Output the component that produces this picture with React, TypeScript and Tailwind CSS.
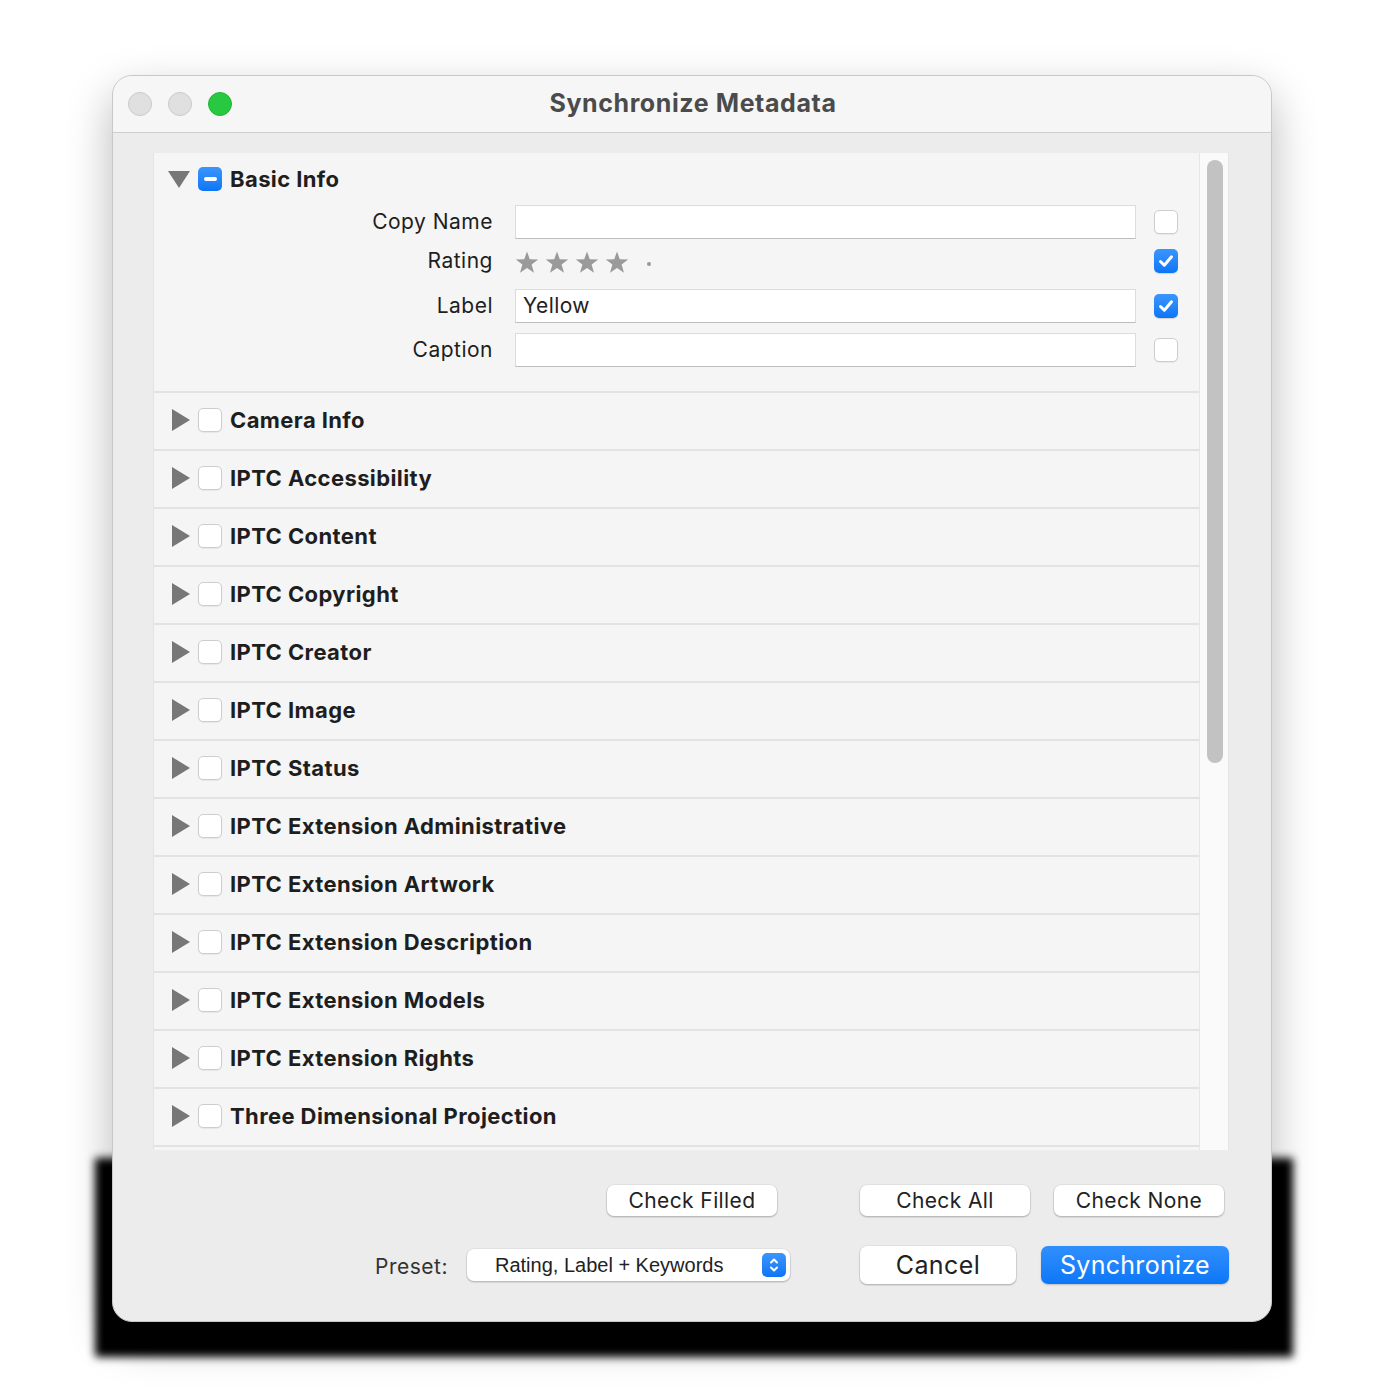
import React from 'react';

const sections = [
  'Camera Info',
  'IPTC Accessibility',
  'IPTC Content',
  'IPTC Copyright',
  'IPTC Creator',
  'IPTC Image',
  'IPTC Status',
  'IPTC Extension Administrative',
  'IPTC Extension Artwork',
  'IPTC Extension Description',
  'IPTC Extension Models',
  'IPTC Extension Rights',
  'Three Dimensional Projection',
];

const Box = ({ checked = false }: { checked?: boolean }) =>
  checked ? (
    <div className="w-[24px] h-[24px] rounded-[5px] bg-gradient-to-b from-[#3a95fd] to-[#0a76f6] flex items-center justify-center shadow-[0_1px_1px_rgba(0,0,0,0.15)]">
      <svg width="18" height="18" viewBox="0 0 18 18">
        <path d="M3.5 9.5 L7.3 13.2 L14.5 4.8" fill="none" stroke="white" strokeWidth="3" strokeLinecap="round" strokeLinejoin="round" />
      </svg>
    </div>
  ) : (
    <div className="w-[24px] h-[24px] rounded-[5px] bg-white border border-[#cdcdcd] shadow-[0_1px_1px_rgba(0,0,0,0.06)]" />
  );

const Star = () => (
  <svg width="24" height="23" viewBox="0 0 24 23">
    <polygon points="12,0.5 14.8,8.3 23.2,8.5 16.6,13.6 19,21.8 12,17 5,21.8 7.4,13.6 0.8,8.5 9.2,8.3" fill="#9a9a9a" />
  </svg>
);

const Btn = ({ label, w, h = 'h-[31px]', text = 'text-[21px]' }: { label: string; w: string; h?: string; text?: string }) => (
  <button className={`${w} ${h} ${text} rounded-[7px] bg-white text-[#222] tracking-[0.4px] shadow-[0_0.5px_0_1px_rgba(0,0,0,0.08),0_1px_2px_rgba(0,0,0,0.18)] flex items-center justify-center leading-none`}>
    {label}
  </button>
);

export default function App() {
  return (
    <div className="relative min-h-[1398px] bg-white pt-[75px] pl-[112px]" style={{ fontFamily: 'Inter, "Noto Sans", sans-serif' }}>
      {/* dark band behind the window */}
      <div className="absolute left-[95px] top-[1158px] w-[1198px] h-[199px] bg-black blur-[4px]" />

      <div className="relative w-[1160px] h-[1247px] rounded-[20px] overflow-hidden bg-[#ececec] border border-[#c8c8c8] shadow-[0_18px_45px_rgba(0,0,0,0.28)]">
        {/* title bar */}
        <div className="relative h-[57px] bg-[#f6f6f6] border-b border-[#cfcfcf] flex items-center">
          <div className="flex items-center gap-[16px] pl-[15px]">
            <div className="w-[24px] h-[24px] rounded-full bg-[#e0e0e0] border border-[#c9c9c9]" />
            <div className="w-[24px] h-[24px] rounded-full bg-[#e0e0e0] border border-[#c9c9c9]" />
            <div className="w-[24px] h-[24px] rounded-full bg-[#28c840] border border-[#22b537]" />
          </div>
          <div className="absolute inset-0 flex items-center justify-center text-[25px] font-bold text-[#4b4b4b] tracking-[0.6px] pl-[2px]">
            Synchronize Metadata
          </div>
        </div>

        {/* scroll panel */}
        <div className="ml-[40px] mt-[20px] w-[1076px] h-[997px] flex bg-[#f5f5f5] border-l border-[#e4e4e4] overflow-hidden">
          <div className="w-[1046px] flex flex-col">
            {/* Basic Info */}
            <div className="h-[240px] border-b-2 border-[#e2e2e2] flex flex-col">
              <div className="h-[52px] flex items-center pl-[14px]">
                <svg width="22" height="17" viewBox="0 0 22 17" className="mr-[8px]">
                  <polygon points="0,0 22,0 11,17" fill="#777" />
                </svg>
                <div className="w-[24px] h-[24px] rounded-[5px] bg-gradient-to-b from-[#3a95fd] to-[#0a76f6] flex items-center justify-center">
                  <div className="w-[13px] h-[4px] rounded-full bg-white" />
                </div>
                <span className="ml-[8px] text-[22px] font-bold text-[#1e1e1e] tracking-[0.4px]">Basic Info</span>
              </div>
              {[
                { label: 'Copy Name', kind: 'input', value: '', checked: false, mt: 'mt-0' },
                { label: 'Rating', kind: 'stars', value: '', checked: true, mt: 'mt-[5px]' },
                { label: 'Label', kind: 'input', value: 'Yellow', checked: true, mt: 'mt-[11px]' },
                { label: 'Caption', kind: 'input', value: '', checked: false, mt: 'mt-[10px]' },
              ].map((f) => (
                <div key={f.label} className={`${f.mt} h-[34px] flex items-center`}>
                  <div className="w-[339px] text-right text-[21px] text-[#1e1e1e] tracking-[0.5px]">{f.label}</div>
                  <div className="ml-[22px] w-[621px] h-[34px]">
                    {f.kind === 'input' ? (
                      <div className="h-full bg-white border border-[#dcdcdc] border-b-[#bdbdbd] flex items-center pl-[7px] text-[21px] text-[#222] tracking-[0.4px]">
                        {f.value}
                      </div>
                    ) : (
                      <div className="h-full flex items-center gap-[6px] pt-[2px]">
                        <Star />
                        <Star />
                        <Star />
                        <Star />
                        <div className="ml-[12px] mt-[4px] w-[4px] h-[4px] rounded-full bg-[#999]" />
                      </div>
                    )}
                  </div>
                  <div className="ml-[18px]">
                    <Box checked={f.checked} />
                  </div>
                </div>
              ))}
            </div>

            {sections.map((s) => (
              <div key={s} className="h-[58px] shrink-0 border-b-2 border-[#e2e2e2] flex items-center pl-[18px] pb-[2px]">
                <svg width="18" height="22" viewBox="0 0 18 22" className="mr-[8px]">
                  <polygon points="0,0 18,11 0,22" fill="#777" />
                </svg>
                <Box />
                <span className="ml-[8px] text-[22px] font-bold text-[#1e1e1e] tracking-[0.4px]">{s}</span>
              </div>
            ))}
          </div>

          {/* scrollbar */}
          <div className="w-[30px] bg-[#fafafa] border-l border-[#e6e6e6] border-r pt-[7px] pl-[7px]">
            <div className="w-[16px] h-[603px] rounded-full bg-[#c2c2c2]" />
          </div>
        </div>

        {/* bottom controls */}
        <div className="mt-[35px] flex items-center pl-[494px]">
          <Btn label="Check Filled" w="w-[170px]" />
          <div className="ml-[83px]">
            <Btn label="Check All" w="w-[170px]" />
          </div>
          <div className="ml-[24px]">
            <Btn label="Check None" w="w-[170px]" />
          </div>
        </div>

        <div className="mt-[30px] flex items-center pl-[262px]">
          <span className="text-[21px] text-[#333] tracking-[0.5px] pt-[4px]">Preset:</span>
          <div className="ml-[19px] w-[323px] h-[32px] rounded-[7px] bg-white shadow-[0_0.5px_0_1px_rgba(0,0,0,0.07),0_1px_2px_rgba(0,0,0,0.18)] flex items-center pl-[28px] pr-[4px]">
            <span className="flex-1 text-[20px] text-[#222]" style={{ fontFamily: '"Liberation Sans", Arial, sans-serif' }}>
              Rating, Label + Keywords
            </span>
            <div className="w-[24px] h-[24px] rounded-[5px] bg-gradient-to-b from-[#3a95fd] to-[#0a76f6] flex items-center justify-center">
              <svg width="12" height="18" viewBox="0 0 12 18">
                <path d="M3 6.5 L6 3.5 L9 6.5 M3 11.5 L6 14.5 L9 11.5" fill="none" stroke="white" strokeWidth="2" strokeLinecap="round" strokeLinejoin="round" />
              </svg>
            </div>
          </div>
          <div className="ml-[70px]">
            <Btn label="Cancel" w="w-[156px]" h="h-[38px]" text="text-[25px]" />
          </div>
          <button className="ml-[25px] w-[188px] h-[38px] rounded-[7px] bg-gradient-to-b from-[#2f8ffd] to-[#0a77f7] text-white text-[25px] leading-none flex items-center justify-center shadow-[0_1px_2px_rgba(0,0,0,0.2)] tracking-[0.3px]">
            Synchronize
          </button>
        </div>
      </div>
    </div>
  );
}
